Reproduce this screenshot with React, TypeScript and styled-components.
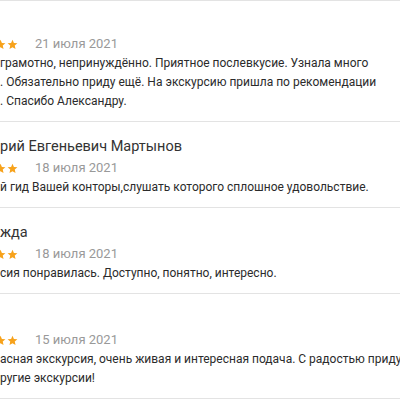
import * as React from 'react'
import styled, { createGlobalStyle } from 'styled-components';

const GlobalStyle = createGlobalStyle`
    html, body {
        margin: 0;
        padding: 0;
        background: #fff;
        overflow: hidden;
    }
    body {
        font-family: Roboto, "Liberation Sans", sans-serif;
        -webkit-font-smoothing: antialiased;
    }
`;

const List = styled.div`
    width: 400px;
    overflow: hidden;
    border-top: 1px solid #e3e3e3;
`;

const Item = styled.div<{ $first?: boolean }>`
    padding: ${p => (p.$first ? '11px' : '14px')} 0 10px 0;
    border-bottom: 1px solid #e3e3e3;
`;

const Author = styled.div`
    height: 22px;
    font-size: 14.5px;
    line-height: 22px;
    color: #333;
    white-space: nowrap;
`;

const Meta = styled.div`
    display: flex;
    align-items: center;
    height: 20px;
`;

const Stars = styled.div`
    display: flex;
    gap: 1px;
    margin-left: -41px;
`;

const DateText = styled.span`
    margin-left: 17px;
    font-size: 13px;
    line-height: 20px;
    color: #999;
`;

const Body = styled.div`
    font-size: 12px;
    line-height: 19px;
    color: #2b2b2b;
    white-space: nowrap;
`;

function Star() {
    return (
        <svg width="11" height="11" viewBox="0 0 24 24">
            <path d="M12 1.5l3.1 7.1 7.6.7-5.8 5.1 1.7 7.5L12 17.9l-6.6 4 1.7-7.5-5.8-5.1 7.6-.7z" fill="#f7a21b" />
        </svg>
    );
}

type Review = {
    author: string,
    date: string,
    lines: string[],
}

const reviews: Review[] = [
    {
        author: '',
        date: '21 июля 2021',
        lines: [
            'грамотно, непринуждённо. Приятное послевкусие. Узнала много',
            '. Обязательно приду ещё. На экскурсию пришла по рекомендации',
            '. Спасибо Александру.',
        ],
    },
    {
        author: 'рий Евгеньевич Мартынов',
        date: '18 июля 2021',
        lines: ['й гид Вашей конторы,слушать которого сплошное удовольствие.'],
    },
    {
        author: 'жда',
        date: '18 июля 2021',
        lines: ['сия понравилась. Доступно, понятно, интересно.'],
    },
    {
        author: '',
        date: '15 июля 2021',
        lines: [
            'асная экскурсия, очень живая и интересная подача. С радостью приду',
            'ругие экскурсии!',
        ],
    },
];

export default function App() {
    return (
        <>
            <GlobalStyle />
            <List>
                {reviews.map((r, i) => (
                    <Item key={i} $first={i === 0}>
                        <Author>{r.author}</Author>
                        <Meta>
                            <Stars>
                                {[0, 1, 2, 3, 4].map(s => <Star key={s} />)}
                            </Stars>
                            <DateText>{r.date}</DateText>
                        </Meta>
                        <Body>
                            {r.lines.map((l, j) => <div key={j}>{l}</div>)}
                        </Body>
                    </Item>
                ))}
            </List>
        </>
    );
}
